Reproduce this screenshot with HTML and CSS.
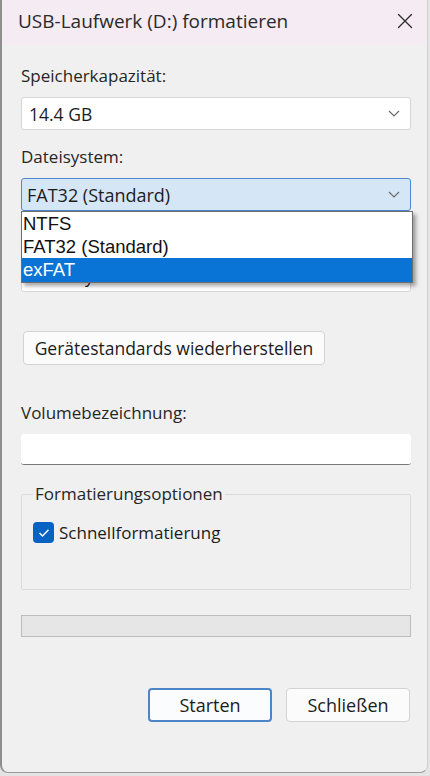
FILE: index.html
```html
<!DOCTYPE html>
<html lang="de">
<head>
<meta charset="utf-8">
<title>USB-Laufwerk (D:) formatieren</title>
<link rel="stylesheet" href="styles.css">
</head>
<body>
<div class="window">
  <header class="titlebar">
    <span class="title">USB-Laufwerk (D:) formatieren</span>
    <button class="close" aria-label="Schließen">
      <svg width="16" height="16" viewBox="0 0 16 16"><path d="M1.5 1.5 L14.5 14.5 M14.5 1.5 L1.5 14.5" stroke="#2b2b2b" stroke-width="1.3" fill="none" stroke-linecap="round"/></svg>
    </button>
  </header>
  <main class="content">
    <div class="field">
      <div class="label">Speicherkapazität:</div>
      <div class="combo">
        <span>14.4 GB</span>
        <svg class="chev" width="12" height="7" viewBox="0 0 12 7"><path d="M1 1 L6 6 L11 1" stroke="#6b6b6b" stroke-width="1.2" fill="none"/></svg>
      </div>
    </div>
    <div class="field">
      <div class="label">Dateisystem:</div>
      <div class="combo-wrap">
        <div class="combo focused">
          <span>FAT32 (Standard)</span>
          <svg class="chev" width="12" height="7" viewBox="0 0 12 7"><path d="M1 1 L6 6 L11 1" stroke="#6b6b6b" stroke-width="1.2" fill="none"/></svg>
        </div>
        <ul class="dropdown">
          <li>NTFS</li>
          <li>FAT32 (Standard)</li>
          <li class="selected">exFAT</li>
        </ul>
      </div>
    </div>
    <div class="field">
      <div class="label">Größe der Zuordnungseinheit:</div>
      <div class="combo">
        <span>4096 Bytes</span>
        <svg class="chev" width="12" height="7" viewBox="0 0 12 7"><path d="M1 1 L6 6 L11 1" stroke="#6b6b6b" stroke-width="1.2" fill="none"/></svg>
      </div>
    </div>
    <button class="btn restore">Gerätestandards wiederherstellen</button>
    <div class="field volume">
      <div class="label">Volumebezeichnung:</div>
      <div class="textbox"></div>
    </div>
    <fieldset class="group">
      <legend>Formatierungsoptionen</legend>
      <label class="check">
        <span class="box"><svg width="12" height="10" viewBox="0 0 12 10"><path d="M1.5 5 L4.5 8 L10.5 1.8" stroke="#ffffff" stroke-width="1.4" fill="none"/></svg></span>
        <span>Schnellformatierung</span>
      </label>
    </fieldset>
    <div class="progress"></div>
    <div class="actions">
      <button class="btn primary">Starten</button>
      <button class="btn">Schließen</button>
    </div>
  </main>
</div>
</body>
</html>
```
FILE: styles.css
```css
* { box-sizing: border-box; }
html, body { margin: 0; padding: 0; }
body {
  background: #e4e4e4;
  font-family: "Open Sans", "Noto Sans", sans-serif;
  color: #1c1c1c;
  width: 430px;
  height: 776px;
  overflow: hidden;
}
.window {
  width: 428px;
  height: 773px;
  background: #f0f0f0;
  border-left: 2px solid #8e8e8e;
  border-right: 1px solid #cfcfcf;
  border-bottom: 1px solid #9a9a9a;
  border-radius: 0 0 8px 8px;
  overflow: hidden;
}
.titlebar {
  height: 45px;
  background: #f4ebf3;
  display: flex;
  align-items: center;
  justify-content: space-between;
  padding: 0 14px 3px 16px;
}
.title {
  font-size: 19px;
  color: #2a2a2a;
}
.close {
  border: 0;
  background: transparent;
  padding: 0;
  width: 16px;
  height: 16px;
  display: flex;
}
.content {
  padding: 20px 16px 0 19px;
  display: flex;
  flex-direction: column;
}
.field {
  display: flex;
  flex-direction: column;
  gap: 10px;
  margin-bottom: 16px;
}
.label {
  font-size: 17px;
  line-height: 22px;
  color: #262626;
}
.combo-wrap { position: relative; }
.combo {
  height: 33px;
  background: #fff;
  border: 1px solid #d6d6d6;
  border-radius: 3px;
  display: flex;
  align-items: center;
  justify-content: space-between;
  padding: 0 10px 0 7px;
  font-size: 17.5px;
  color: #1c1c1c;
}
.combo.focused {
  background: #d5e7f7;
  border-color: #4a88cf;
  padding-left: 5px;
  font-size: 18px;
}
.dropdown {
  position: absolute;
  top: 100%;
  left: 0;
  right: -2px;
  margin: 0;
  padding: 0;
  list-style: none;
  background: #fff;
  border: 1px solid #6e6e6e;
  box-shadow: 3px 3px 4px rgba(0,0,0,0.35);
  font-family: "Liberation Sans", Arial, sans-serif;
  font-size: 18.5px;
  z-index: 2;
}
.dropdown li {
  height: 23px;
  line-height: 23px;
  padding-left: 1px;
  color: #111;
}
.dropdown li.selected {
  background: #0a74d6;
  color: #fff;
  height: 24px;
}
.btn {
  font-family: inherit;
  font-size: 18px;
  color: #1c1c1c;
  background: #fbfbfb;
  border: 1px solid #d3d3d3;
  border-radius: 4px;
  height: 34px;
  padding: 0;
}
.restore {
  align-self: flex-start;
  margin: 23px 0 0 2px;
  width: 302px;
  font-size: 17.5px;
}
.volume { margin: 37px 0 0 0; }
.textbox {
  height: 31px;
  background: #fff;
  border-radius: 3px;
  border-bottom: 1.5px solid #7a7a7a;
}
.group {
  margin: 18px 0 0 0;
  border: 1px solid #dadada;
  border-radius: 2px;
  padding: 17px 11px 46px;
  min-width: 0;
}
.group legend {
  font-size: 17px;
  line-height: 22px;
  padding: 0 2px;
  color: #262626;
}
.check {
  display: flex;
  align-items: center;
  gap: 5px;
  font-size: 17px;
  line-height: 21px;
  color: #1c1c1c;
}
.box {
  width: 21px;
  height: 21px;
  border-radius: 4px;
  background: #0862c4;
  display: flex;
  align-items: center;
  justify-content: center;
}
.progress {
  margin-top: 25px;
  height: 22px;
  background: #e6e6e6;
  border: 1px solid #bdbdbd;
}
.actions {
  margin-top: 51px;
  display: flex;
  justify-content: flex-end;
  gap: 14px;
  padding-right: 1px;
}
.actions .btn { width: 124px; }
.primary {
  border: 2px solid #4c84c8;
  background: #fafcfd;
}
```
